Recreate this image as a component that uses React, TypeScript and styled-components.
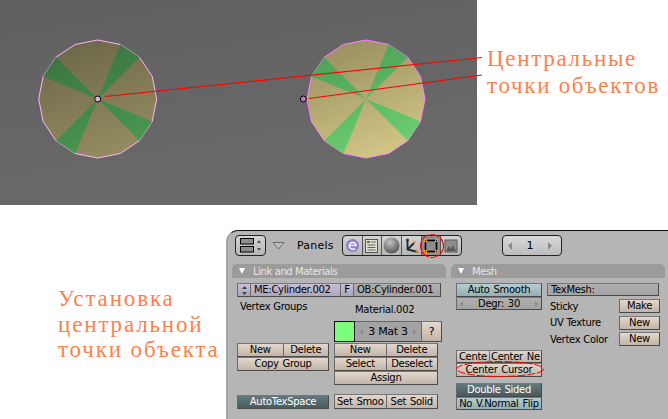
import React from "react";
import styled, { createGlobalStyle, css } from "styled-components";

const Global = createGlobalStyle`
  html, body { margin: 0; padding: 0; background: #fff; }
`;

const Page = styled.div`
  width: 668px;
  height: 419px;
  overflow: hidden;
  background: #fff;
  display: flex;
  flex-direction: column;
`;
const TopRow = styled.div`
  display: flex;
  height: 205px;
`;
const BottomRow = styled.div`
  display: flex;
  margin-top: 25px;
  height: 189px;
`;
const Label = styled.div<{ $ml: number; $mt: number; $w: number }>`
  font-family: "Liberation Serif", serif;
  font-size: 23px;
  line-height: 27px;
  letter-spacing: 1.7px;
  color: #ff7f4c;
  white-space: nowrap;
  margin-left: ${(p) => p.$ml}px;
  margin-top: ${(p) => p.$mt}px;
  width: ${(p) => p.$w}px;
  flex: none;
`;
const BottomLabel = styled(Label)`
  line-height: 25.5px;
  letter-spacing: 1.85px;
`;
const Win = styled.div`
  flex: 1;
  background: #b5b5b5;
  border-top: 1px solid #111;
  border-top-left-radius: 12px;
  border-left: 2px solid #a6a6a6;
  display: flex;
  flex-direction: column;
  font-family: "DejaVu Sans", sans-serif;
  font-size: 10px;
  letter-spacing: -0.3px;
  color: #000;
`;
const Toolbar = styled.div`
  height: 21px;
  padding: 4px 0 8px 7px;
  display: flex;
  align-items: center;
`;
const ToolGroup = styled.div`
  height: 21px;
  box-sizing: border-box;
  border: 1px solid #222;
  border-radius: 4px;
  background: linear-gradient(#d4d4d4, #b6b6b6);
  display: flex;
  align-items: center;
`;
const MenuButton = styled(ToolGroup)`
  width: 31px;
  justify-content: flex-start;
  padding-left: 2px;
  gap: 1px;
`;
const TriWrap = styled.div`
  width: 13px;
  margin-left: 6px;
  display: flex;
`;
const PanelsLabel = styled.div`
  font-size: 11px;
  margin-left: 12px;
  width: 45px;
  letter-spacing: 0.2px;
`;
const IconGroup = styled(ToolGroup)`
  padding: 0;
  position: relative;
`;
const IconCell = styled.div<{ $on?: boolean }>`
  width: 19.67px;
  height: 19px;
  display: flex;
  align-items: center;
  justify-content: center;
  border-right: 1px solid #555;
  box-sizing: border-box;
  background: ${(p) => (p.$on ? "#8f8f8f" : "transparent")};
  &:last-of-type { border-right: none; }
`;
const Ring = styled.svg`
  position: absolute;
  left: 76px;
  top: -3px;
  overflow: visible;
`;
const Counter = styled(ToolGroup)`
  width: 60px;
  margin-left: 40px;
  justify-content: space-between;
  padding: 0 9px 0 5px;
  font-size: 11px;
  background: linear-gradient(#dadada, #bcbcbc);
`;
const Arrow = styled.span<{ $right?: boolean; $size?: number }>`
  width: 0;
  height: 0;
  border-top: ${(p) => p.$size ?? 4}px solid transparent;
  border-bottom: ${(p) => p.$size ?? 4}px solid transparent;
  ${(p) =>
    p.$right
      ? css`border-left: ${p.$size ?? 4}px solid #8a8a8a;`
      : css`border-right: ${p.$size ?? 4}px solid #8a8a8a;`}
`;
const Panels = styled.div`
  display: flex;
  gap: 5px;
  padding-left: 4px;
  flex: 1;
`;
const Panel = styled.div`
  width: 214px;
`;
const PanelHeader = styled.div`
  height: 14px;
  background: #9b9b9b;
  border-radius: 5px 5px 0 0;
  display: flex;
  align-items: center;
  color: #e8e8e8;
  padding-left: 7px;
  gap: 8px;
  letter-spacing: -0.4px;
`;
const Down = styled.span`
  width: 0;
  height: 0;
  border-left: 3.5px solid transparent;
  border-right: 3.5px solid transparent;
  border-top: 6px solid #fff;
`;
const PanelBody = styled.div`
  padding: 5px;
`;
const MeRow = styled.div`
  display: flex;
  height: 14px;
`;
const Columns = styled.div`
  display: flex;
  gap: 5px;
`;
const Col = styled.div<{ $w: number }>`
  width: ${(p) => p.$w}px;
  flex: none;
  display: flex;
  flex-direction: column;
`;
const Caption = styled.div<{ $mt: number; $ml: number }>`
  height: 14px;
  line-height: 14px;
  margin-top: ${(p) => p.$mt}px;
  margin-left: ${(p) => p.$ml}px;
  white-space: nowrap;
`;

type Tone = "tan" | "lav" | "gray" | "teal" | "dark";
const tones: Record<Tone, string> = {
  tan: "linear-gradient(#e3d8ce,#c2b4a8)",
  lav: "linear-gradient(#c8bed6,#aea4bc)",
  gray: "linear-gradient(#b0b0b0,#a2a2a2)",
  teal: "linear-gradient(#b6cdd1,#93b0b5)",
  dark: "linear-gradient(#64797d,#485c60)",
};
const Btn = styled.div<{ $tone?: Tone; $grow?: number; $w?: number; $h?: number }>`
  box-sizing: border-box;
  height: ${(p) => p.$h ?? 14}px;
  ${(p) => (p.$w ? `width: ${p.$w}px; flex: none;` : `flex: ${p.$grow ?? 1} 1 0;`)}
  min-width: 0;
  background: ${(p) => tones[p.$tone ?? "tan"]};
  color: ${(p) => (p.$tone === "dark" ? "#fff" : "#000")};
  border: 1px solid #4a4a4a;
  border-left-color: #6a6a6a;
  border-top-color: #777;
  margin-right: -1px;
  display: flex;
  align-items: center;
  justify-content: center;
  white-space: nowrap;
  overflow: hidden;
  line-height: 1;
  word-spacing: 1px;
`;
const LeftBtn = styled(Btn)`
  justify-content: flex-start;
  padding-left: 3px;
`;
const BtnRow = styled.div`
  display: flex;
  padding-right: 1px;
`;
const Stack = styled.div<{ $mt: number; $w: number }>`
  width: ${(p) => p.$w}px;
  margin-top: ${(p) => p.$mt}px;
  position: relative;
  display: flex;
  flex-direction: column;
`;
const Spinner = styled(Btn)`
  justify-content: space-between;
  padding: 0 3px;
`;
const MatRow = styled.div`
  display: flex;
  height: 21px;
  width: 107px;
  margin-top: 4px;
  margin-bottom: 1px;
`;
const Swatch = styled.div`
  width: 21px;
  box-sizing: border-box;
  background: #7cff7c;
  border: 1px solid #111;
`;
const MatName = styled.div`
  flex: 1;
  background: #a3a3a3;
  display: flex;
  align-items: center;
  justify-content: space-between;
  padding: 0 5px;
  font-size: 11px;
  border-top: 1px solid #666;
  border-bottom: 1px solid #444;
`;
const Help = styled(Btn)`
  font-size: 11px;
`;
const AttrRows = styled.div`
  display: flex;
  flex-direction: column;
  gap: 2.5px;
  margin-top: 3px;
`;
const AttrRow = styled.div`
  display: flex;
  align-items: center;
  justify-content: space-between;
  padding: 0 0 0 3px;
  height: 14px;
`;
const Ellipse = styled.svg`
  position: absolute;
  left: 0;
  top: 10px;
  overflow: visible;
`;

const poly = (cx: number, cy: number, r: number) =>
  Array.from({ length: 16 }, (_, i) => {
    const a = (i / 16) * Math.PI * 2 - Math.PI / 2;
    return [cx + r * Math.cos(a), cy + r * Math.sin(a)] as const;
  });

function Disc({ cx, id, tan, green, edge }: { cx: number; id: string; tan: [string, string]; green: [string, string]; edge: string }) {
  const cy = 99;
  const p = poly(cx, cy, 59);
  const wedges = [1, 5, 9, 13];
  return (
    <g>
      <defs>
        <linearGradient id={`${id}Tan`} x1="0.25" y1="0" x2="0.6" y2="1">
          <stop offset="0" stopColor={tan[0]} />
          <stop offset="1" stopColor={tan[1]} />
        </linearGradient>
        <linearGradient id={`${id}Green`} gradientUnits="userSpaceOnUse" x1={cx - 25} y1={40} x2={cx + 15} y2={158}>
          <stop offset="0" stopColor={green[0]} />
          <stop offset="1" stopColor={green[1]} />
        </linearGradient>
      </defs>
      <polygon points={p.map((q) => q.join(",")).join(" ")} fill={`url(#${id}Tan)`} stroke={edge} strokeWidth="1" />
      {wedges.map((i) => (
        <polygon key={i} points={`${cx},${cy} ${p[i].join(",")} ${p[i + 1].join(",")}`} fill={`url(#${id}Green)`} />
      ))}
    </g>
  );
}

function Viewport() {
  return (
    <svg width="484" height="205" viewBox="0 0 484 205" style={{ flex: "none", display: "block" }}>
      <defs>
        <linearGradient id="backdrop" x1="0.2" y1="0" x2="0.6" y2="1">
          <stop offset="0" stopColor="#616161" />
          <stop offset="1" stopColor="#6a6a6a" />
        </linearGradient>
      </defs>
      <rect width="477" height="205" fill="url(#backdrop)" />
      <Disc cx={97.7} id="left" tan={["#6c674a", "#958c60"]} green={["#3a7240", "#4a9a52"]} edge="#ffb4ff" />
      <Disc cx={366} id="right" tan={["#988e60", "#d2c786"]} green={["#4a9c56", "#6ed272"]} edge="#ff80ff" />
      <circle cx="97.7" cy="99" r="3" fill="#dcb4dc" stroke="#000" />
      <circle cx="303.3" cy="99" r="3" fill="#c86ec8" stroke="#000" />
      <line x1="105" y1="96.5" x2="482" y2="57.5" stroke="#f00" strokeWidth="1.2" />
      <line x1="309" y1="98.5" x2="482" y2="75" stroke="#f00" strokeWidth="1.2" />
    </svg>
  );
}

const MenuIcon = () => (
  <svg width="26" height="19" viewBox="0 0 26 19">
    <rect x="2.5" y="2.5" width="13" height="5.5" fill="#8e8e8e" stroke="#000" />
    <rect x="2.5" y="10.5" width="13" height="5.5" fill="#8e8e8e" stroke="#000" />
    <path d="M21 4l2 3h-4zM21 15l2-3h-4z" fill="#555" />
  </svg>
);
const Triangle = () => (
  <svg width="13" height="9" viewBox="0 0 13 9"><path d="M1 1.5h11L6.5 8z" fill="#bdbdbd" stroke="#6a6a6a" /></svg>
);
const IconE = () => (
  <svg width="15" height="15" viewBox="0 0 15 15">
    <circle cx="7.5" cy="7.5" r="6.5" fill="#8f7cc8" />
    <path d="M4 7.5h7a3.4 3.4 0 1 0-1 2.8" fill="none" stroke="#f2eef9" strokeWidth="1.7" />
  </svg>
);
const IconDoc = () => (
  <svg width="15" height="16" viewBox="0 0 15 16">
    <rect x="1.5" y="1.5" width="12" height="13" fill="#e2ded2" stroke="#555" />
    <path d="M7 4h5M3.5 7h8M3.5 9.500h8M3.5 12h8" stroke="#666" />
    <rect x="3" y="3" width="3" height="2" fill="#666" />
  </svg>
);
const IconSphere = () => (
  <svg width="17" height="17" viewBox="0 0 17 17">
    <defs>
      <radialGradient id="sphereShade" cx="0.4" cy="0.3" r="0.8">
        <stop offset="0" stopColor="#c4c4c4" />
        <stop offset="1" stopColor="#4a4a4a" />
      </radialGradient>
    </defs>
    <circle cx="8.500" cy="8.500" r="8" fill="url(#sphereShade)" />
  </svg>
);
const IconAxes = () => (
  <svg width="17" height="17" viewBox="0 0 17 17">
    <path d="M4.500 3V12.500L15 15M4.500 12.500L11 6" fill="none" stroke="#1c2c2c" strokeWidth="1.8" />
    <circle cx="4.500" cy="3" r="1.6" fill="#2a3a3a" />
    <path d="M10 3.500l3 .5-1 3zM14 12.500l2 3-4 0z" fill="#e88a2e" />
  </svg>
);
const IconMesh = () => (
  <svg width="16" height="16" viewBox="0 0 16 16">
    <rect x="2.500" y="2.500" width="11" height="11" fill="#8d8d8d" stroke="#000" strokeWidth="1.6" />
    <path d="M1 1h3v3H1zM12 1h3v3h-3zM1 12h3v3H1zM12 12h3v3h-3z" fill="#ff9020" />
    <path d="M2 2h1v1H2zM13 2h1v1h-1zM2 13h1v1H2zM13 13h1v1h-1z" fill="#000" />
  </svg>
);
const IconPicture = () => (
  <svg width="14" height="14" viewBox="0 0 14 14">
    <rect x="1" y="1" width="12" height="12" fill="#8e8e8e" stroke="#5c5c5c" />
    <path d="M2 12l3-5 2 3 2-4 3 6z" fill="#5a5a5a" />
  </svg>
);

export default function App() {
  return (
    <Page>
      <Global />
      <TopRow>
        <Viewport />
        <Label $ml={3} $mt={45} $w={180}>
          Центральные
          <br />
          точки объектов
        </Label>
      </TopRow>
      <BottomRow>
        <BottomLabel $ml={58} $mt={56} $w={168}>
          Установка
          <br />
          центральной
          <br />
          точки объекта
        </BottomLabel>
        <Win>
          <Toolbar>
            <MenuButton><MenuIcon /></MenuButton>
            <TriWrap><Triangle /></TriWrap>
            <PanelsLabel>Panels</PanelsLabel>
            <IconGroup>
              <IconCell><IconE /></IconCell>
              <IconCell><IconDoc /></IconCell>
              <IconCell><IconSphere /></IconCell>
              <IconCell><IconAxes /></IconCell>
              <IconCell $on><IconMesh /></IconCell>
              <IconCell><IconPicture /></IconCell>
              <Ring width="26" height="26" viewBox="0 0 26 26">
                <circle cx="13" cy="13" r="11.5" fill="none" stroke="#f00" strokeWidth="1.1" strokeDasharray="9 1.5" />
              </Ring>
            </IconGroup>
            <Counter>
              <Arrow />
              <span>1</span>
              <Arrow $right />
            </Counter>
          </Toolbar>
          <Panels>
            <Panel>
              <PanelHeader><Down />Link and Materials</PanelHeader>
              <PanelBody>
                <MeRow>
                  <Btn $tone="lav" $w={14}>
                    <svg width="7" height="9" viewBox="0 0 7 9"><path d="M3.500 0l2.500 3H1zM3.500 9l2.500-3H1z" fill="#444" /></svg>
                  </Btn>
                  <LeftBtn $tone="lav" $w={91}>ME:Cylinder.002</LeftBtn>
                  <Btn $tone="lav" $w={14}>F</Btn>
                  <LeftBtn $tone="gray" $w={88}>OB:Cylinder.001</LeftBtn>
                </MeRow>
                <Columns>
                  <Col $w={92}>
                    <Caption $mt={3} $ml={3}>Vertex Groups</Caption>
                    <Stack $mt={29} $w={92}>
                      <BtnRow><Btn>New</Btn><Btn>Delete</Btn></BtnRow>
                      <BtnRow><Btn>Copy Group</Btn></BtnRow>
                    </Stack>
                    <Stack $mt={24} $w={92}>
                      <BtnRow><Btn $tone="dark">AutoTexSpace</Btn></BtnRow>
                    </Stack>
                  </Col>
                  <Col $w={107}>
                    <Caption $mt={6} $ml={21}>Material.002</Caption>
                    <MatRow>
                      <Swatch />
                      <MatName><Arrow $size={3} /><span>3 Mat 3</span><Arrow $right $size={3} /></MatName>
                      <Help $w={21} $h={21}>?</Help>
                    </MatRow>
                    <Stack $mt={0} $w={104}>
                      <BtnRow><Btn>New</Btn><Btn>Delete</Btn></BtnRow>
                      <BtnRow><Btn>Select</Btn><Btn>Deselect</Btn></BtnRow>
                      <BtnRow><Btn>Assign</Btn></BtnRow>
                    </Stack>
                    <Stack $mt={9} $w={104}>
                      <BtnRow><Btn $h={15}>Set Smoo</Btn><Btn $h={15}>Set Solid</Btn></BtnRow>
                    </Stack>
                  </Col>
                </Columns>
              </PanelBody>
            </Panel>
            <Panel>
              <PanelHeader><Down />Mesh</PanelHeader>
              <PanelBody>
                <Columns>
                  <Col $w={86}>
                    <Stack $mt={0} $w={86}>
                      <BtnRow><Btn $tone="teal">Auto Smooth</Btn></BtnRow>
                      <BtnRow>
                        <Spinner $tone="gray" $h={13}><Arrow $size={3} /><span>Degr: 30</span><Arrow $right $size={3} /></Spinner>
                      </BtnRow>
                    </Stack>
                    <Stack $mt={40} $w={86}>
                      <BtnRow><Btn $h={13} $grow={33}>Cente</Btn><Btn $h={13} $grow={53}>Center Ne</Btn></BtnRow>
                      <BtnRow><Btn>Center Cursor</Btn></BtnRow>
                      <Ellipse width="88" height="18" viewBox="0 0 88 18">
                        <ellipse cx="44" cy="9" rx="43.500" ry="7.500" fill="none" stroke="#f00" strokeWidth="1" strokeDasharray="8 2" />
                      </Ellipse>
                    </Stack>
                    <Stack $mt={6} $w={86}>
                      <BtnRow><Btn $tone="dark">Double Sided</Btn></BtnRow>
                      <BtnRow><Btn $tone="teal" $h={13}>No V.Normal Flip</Btn></BtnRow>
                    </Stack>
                  </Col>
                  <Col $w={112}>
                    <BtnRow><LeftBtn $tone="gray" $h={13}>TexMesh:</LeftBtn></BtnRow>
                    <AttrRows>
                      <AttrRow>Sticky<Btn $w={41}>Make</Btn></AttrRow>
                      <AttrRow>UV Texture<Btn $w={41}>New</Btn></AttrRow>
                      <AttrRow>Vertex Color<Btn $w={41}>New</Btn></AttrRow>
                    </AttrRows>
                  </Col>
                </Columns>
              </PanelBody>
            </Panel>
          </Panels>
        </Win>
      </BottomRow>
    </Page>
  );
}
